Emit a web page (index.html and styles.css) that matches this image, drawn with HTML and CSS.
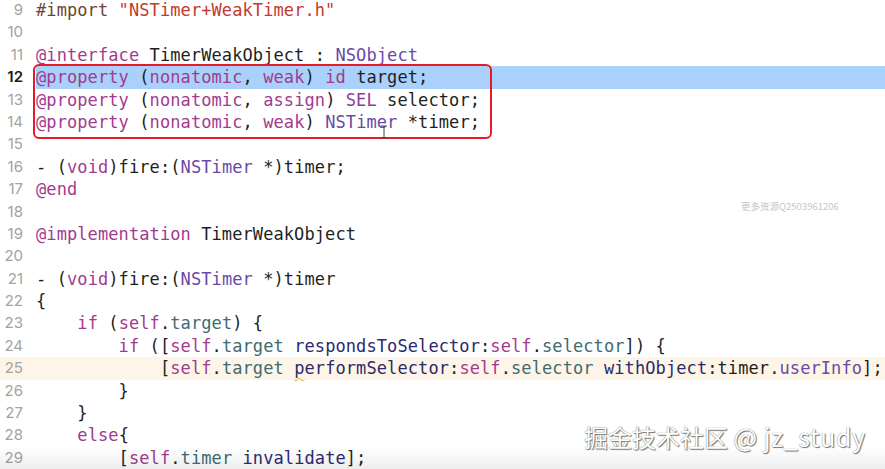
FILE: index.html
```html
<!DOCTYPE html>
<html>
<head>
<meta charset="utf-8">
<link rel="stylesheet" href="styles.css">
</head>
<body>
<div class="editor">
  <div class="line"><span class="num">9</span><span class="code"><span class="pp">#import</span> <span class="str">"NSTimer+WeakTimer.h"</span></span></div>
  <div class="line"><span class="num">10</span><span class="code"></span></div>
  <div class="line"><span class="num">11</span><span class="code"><span class="kw">@interface</span> TimerWeakObject : <span class="ty">NSObject</span></span></div>
  <div class="group">
    <div class="line sel"><span class="num cur-num">12</span><span class="code"><span class="kw">@property</span> (<span class="kw">nonatomic</span>, <span class="kw">weak</span>) <span class="kw">id</span> target;</span></div>
    <div class="line"><span class="num">13</span><span class="code"><span class="kw">@property</span> (<span class="kw">nonatomic</span>, <span class="kw">assign</span>) <span class="ty2">SEL</span> selector;</span></div>
    <div class="line"><span class="num">14</span><span class="code"><span class="kw">@property</span> (<span class="kw">nonatomic</span>, <span class="kw">weak</span>) <span class="ty">NSTimer</span> *timer;</span></div>
    <div class="box"></div>
    <svg class="ibeam" width="8" height="14" viewBox="0 0 8 14"><path d="M1 1h6M4 1v12M1 13h6" stroke="#444" stroke-width="1" fill="none"/></svg>
  </div>
  <div class="line"><span class="num">15</span><span class="code"></span></div>
  <div class="line"><span class="num">16</span><span class="code">- (<span class="kw">void</span>)fire:(<span class="ty">NSTimer</span> *)timer;</span></div>
  <div class="line"><span class="num">17</span><span class="code"><span class="kw">@end</span></span></div>
  <div class="line"><span class="num">18</span><span class="code"></span></div>
  <div class="line"><span class="num">19</span><span class="code"><span class="kw">@implementation</span> TimerWeakObject</span></div>
  <div class="line"><span class="num">20</span><span class="code"></span></div>
  <div class="line"><span class="num">21</span><span class="code">- (<span class="kw">void</span>)fire:(<span class="ty">NSTimer</span> *)timer</span></div>
  <div class="line"><span class="num">22</span><span class="code">{</span></div>
  <div class="line"><span class="num">23</span><span class="code">    <span class="kw">if</span> (<span class="kw">self</span>.<span class="prop">target</span>) {</span></div>
  <div class="line"><span class="num">24</span><span class="code">        <span class="kw">if</span> ([<span class="kw">self</span>.<span class="prop">target</span> <span class="meth">respondsToSelector</span>:<span class="kw">self</span>.<span class="prop">selector</span>]) {</span></div>
  <div class="line cur"><span class="num">25</span><span class="code">            [<span class="kw">self</span>.<span class="prop">target</span> <span class="meth"><span class="warn">p</span>erformSelector</span>:<span class="kw">self</span>.<span class="prop">selector</span> <span class="meth">withObject</span>:timer.<span class="ty">userInfo</span>];</span></div>
  <div class="line"><span class="num">26</span><span class="code">        }</span></div>
  <div class="line"><span class="num">27</span><span class="code">    }</span></div>
  <div class="line"><span class="num">28</span><span class="code">    <span class="kw">else</span>{</span></div>
  <div class="line"><span class="num">29</span><span class="code">        [<span class="kw">self</span>.<span class="prop">timer</span> <span class="meth">invalidate</span>];</span></div>
</div>
<div class="small-mark">更多资源Q2503961206</div>
<div class="fade"></div>
<div class="mark">掘金技术社区 <span class="mark-latin">@ jz_study</span></div>
</body>
</html>
```
FILE: styles.css
```css
html, body {
  margin: 0;
  padding: 0;
  background: #ffffff;
  width: 885px;
  height: 469px;
  overflow: hidden;
  position: relative;
}
.editor {
  margin-top: -1px;
  display: flex;
  flex-direction: column;
}
.line {
  display: flex;
  height: 22.4px;
  line-height: 22.4px;
  align-items: center;
}
.num {
  width: 23px;
  flex: none;
  text-align: right;
  padding-right: 13px;
  font-family: Inter, "Noto Sans", sans-serif;
  font-size: 15px;
  color: #a3a3a3;
}
.cur-num {
  color: #1a1a1a;
  font-weight: 600;
}
.code {
  flex: 1;
  height: 22.4px;
  white-space: pre;
  font-family: "DejaVu Sans Mono", monospace;
  font-size: 17px;
  letter-spacing: 0.09px;
  color: #1f1f1f;
}
.sel .code { background: #a9d1fb; }
.cur { background: #fdf6e8; }
.group { position: relative; }
.box {
  position: absolute;
  left: 33px;
  top: -2px;
  width: 455px;
  height: 71px;
  border: 2px solid #e51b2b;
  border-radius: 6px;
}
.ibeam {
  position: absolute;
  left: 380px;
  top: 59px;
}
.kw { color: #a23b8f; }
.pp { color: #6e4630; }
.str { color: #c43a2c; }
.ty { color: #6a4aa6; }
.ty2 { color: #8e3b9e; }
.prop { color: #3e6c72; }
.meth { color: #2c2a6e; }
.warn {
  text-decoration: underline wavy #e2a63a;
  text-decoration-thickness: 1px;
  text-underline-offset: 3px;
}
.small-mark {
  position: absolute;
  left: 741px;
  top: 199px;
  font-family: "Noto Sans CJK SC", sans-serif;
  font-size: 9.5px;
  color: #c6c6c6;
}
.fade {
  position: absolute;
  left: 0;
  right: 0;
  bottom: 0;
  height: 22px;
  background: linear-gradient(rgba(0,0,0,0), rgba(0,0,0,0.07));
}
.mark {
  position: absolute;
  left: 584px;
  top: 418px;
  font-family: "Noto Sans CJK SC", sans-serif;
  font-size: 24px;
  color: #ffffff;
  text-shadow: 0 0 1px #555, 1px 1px 1px #777;
}
.mark-latin {
  font-size: 25px;
  letter-spacing: 0.6px;
}
```
